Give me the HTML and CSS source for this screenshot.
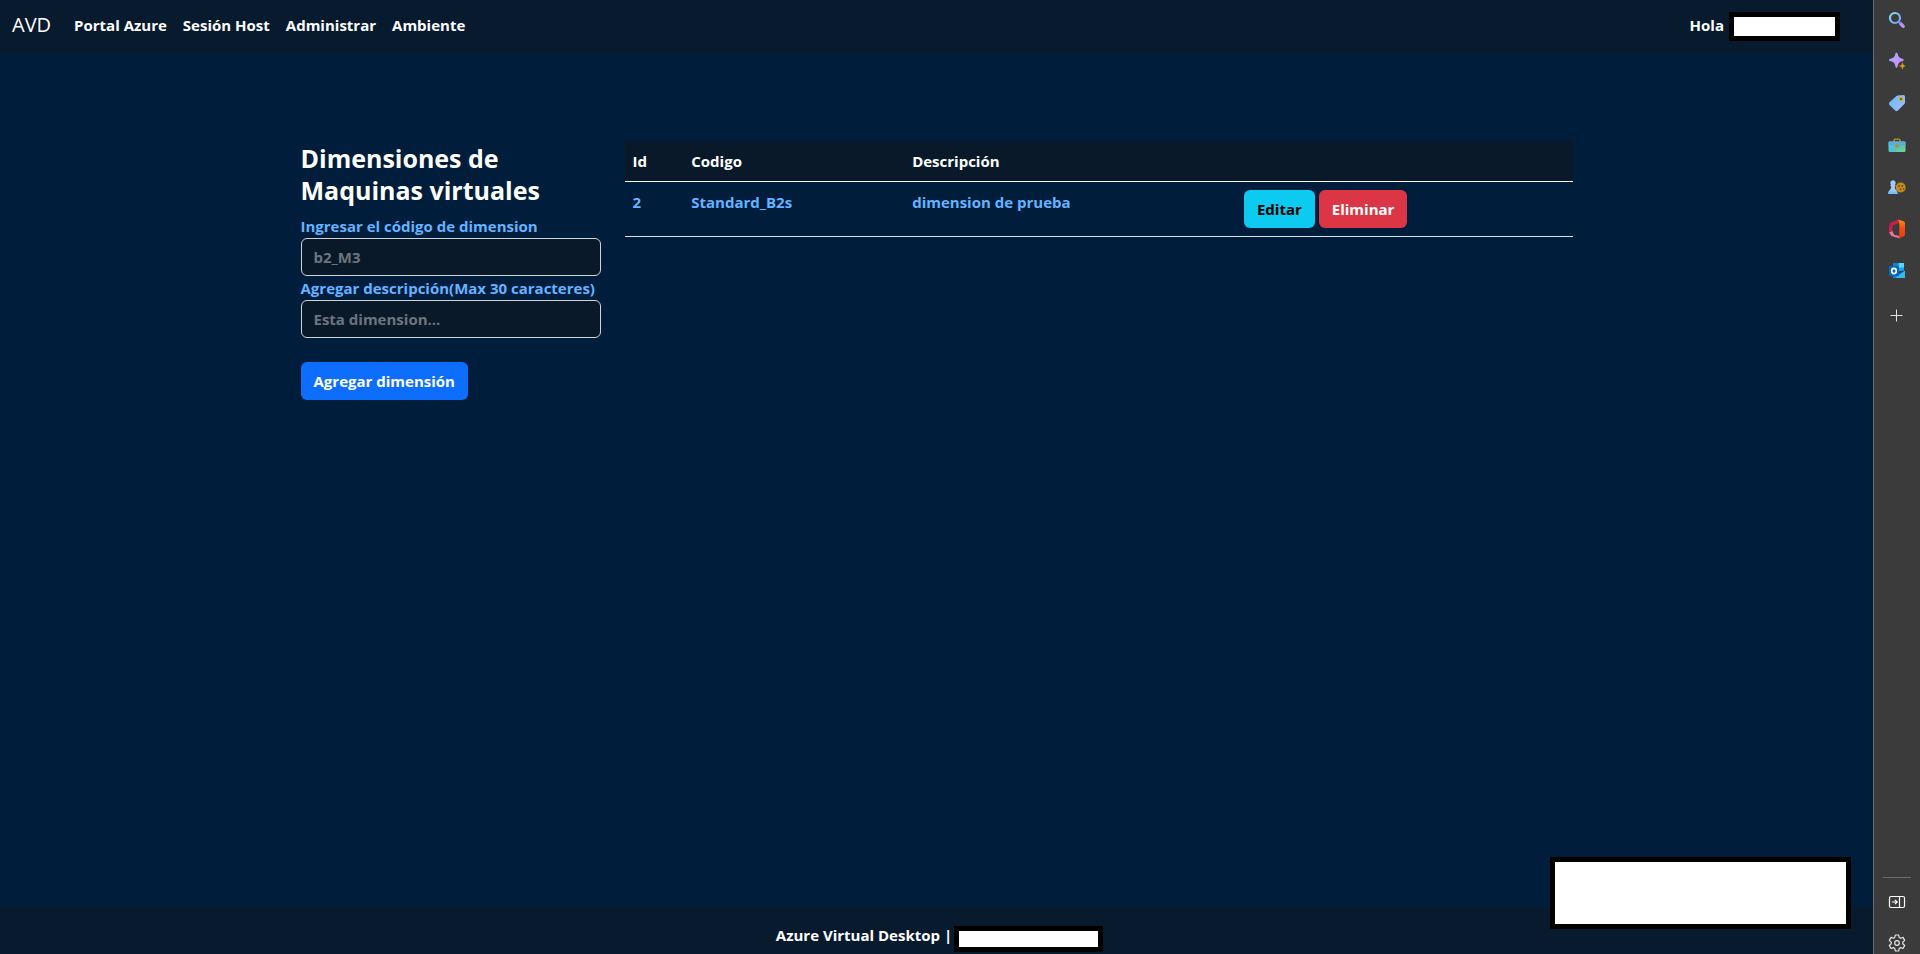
FILE: index.html
```html
<!DOCTYPE html>
<html lang="es">
<head>
<meta charset="utf-8">
<title>AVD - Dimensiones</title>
<link rel="stylesheet" href="styles.css">
</head>
<body>
<div class="page">
  <header class="navbar">
    <a class="brand" href="#">AVD</a>
    <nav class="nav">
      <a href="#">Portal Azure</a>
      <a href="#">Sesión Host</a>
      <a href="#">Administrar</a>
      <a href="#">Ambiente</a>
    </nav>
    <div class="user">Hola <span class="mask mask-user"></span></div>
  </header>
  <main class="container">
    <form class="form">
      <h1>Dimensiones de Maquinas virtuales</h1>
      <label for="codigo">Ingresar el código de dimension</label>
      <input id="codigo" type="text" placeholder="b2_M3">
      <label for="descripcion">Agregar descripción(Max 30 caracteres)</label>
      <input id="descripcion" type="text" maxlength="30" placeholder="Esta dimension...">
      <button class="btn primary" type="button">Agregar dimensión</button>
    </form>
    <div class="list">
      <table>
        <colgroup><col class="c-id"><col class="c-code"><col class="c-desc"><col></colgroup>
        <thead><tr><th>Id</th><th>Codigo</th><th>Descripción</th><th></th></tr></thead>
        <tbody><tr>
          <td>2</td><td>Standard_B2s</td><td>dimension de prueba</td>
          <td><div class="actions"><button class="btn info" type="button">Editar</button><button class="btn danger" type="button">Eliminar</button></div></td>
        </tr></tbody>
      </table>
    </div>
  </main>
  <footer class="footer"><span>Azure Virtual Desktop |</span><span class="mask mask-footer"></span></footer>
  <div class="mask mask-notice"></div>
</div>
<aside class="sidebar">
  <button type="button" aria-label="Buscar"><svg viewBox="0 0 18 18"><defs><linearGradient id="g1" x1="0" y1="0" x2="1" y2="1"><stop offset="0" stop-color="#8be0f5"/><stop offset="1" stop-color="#6d9df0"/></linearGradient></defs><path d="M12.500 12.500l2.800 2.800" stroke="#c08ff0" stroke-width="3.200" stroke-linecap="round"/><path d="M10.500 10.500l2 2" stroke="#7c8fe0" stroke-width="2"/><circle cx="7" cy="7" r="5" fill="none" stroke="url(#g1)" stroke-width="2.200"/></svg></button>
  <button type="button" aria-label="Descubrir"><svg viewBox="0 0 18 18"><defs><linearGradient id="g2" x1="0" y1="0" x2="1" y2="1"><stop offset="0" stop-color="#7cc4fb"/><stop offset=".55" stop-color="#c993fb"/><stop offset="1" stop-color="#b78af5"/></linearGradient></defs><path d="M8.500 .8c.8 0 1 .5 1.200 1.300.7 3 1.600 4 4.600 4.700 1 .3 1.500.6 1.500 1.200s-.5.900-1.500 1.200c-3 .7-3.900 1.700-4.600 4.700-.2.800-.4 1.900-1.200 1.900s-1-1.100-1.200-1.900c-.7-3-1.600-4-4.600-4.700C1.600 8.900 1 8.600 1 8s.6-.9 1.700-1.200c3-.7 3.900-1.700 4.600-4.700.2-.8.400-1.300 1.200-1.300z" fill="url(#g2)"/><path d="M14.500 9.800l1.100 3 2.400 1.200-2.400 1.200-1.100 2.800-1.200-2.800-2.800-1.200 2.800-1.200z" fill="#dc9c08" stroke="#3b3b3b" stroke-width=".4"/></svg></button>
  <button type="button" aria-label="Compras"><svg viewBox="0 0 18 18"><defs><linearGradient id="g3" x1="0" y1="0" x2="1" y2="1"><stop offset="0" stop-color="#66bdf0"/><stop offset="1" stop-color="#a4b9ff"/></linearGradient></defs><path d="M9.600 1.600L15.400 1q1.600 0 1.600 1.600v6q0 .8-.6 1.400l-6.500 6.400q-1.400 1.200-2.700 0L1.500 11q-1.200-1.300 0-2.700l6.700-6q.6-.6 1.400-.7z" fill="url(#g3)"/><circle cx="13" cy="5" r="2.200" fill="#e0a31b"/><circle cx="13" cy="5" r="1" fill="#6a4710"/></svg></button>
  <button type="button" aria-label="Herramientas"><svg viewBox="0 0 18 18"><defs><linearGradient id="g4" x1="0" y1="0" x2="1" y2="1"><stop offset="0" stop-color="#71c8ed"/><stop offset=".5" stop-color="#4cc0d0"/><stop offset="1" stop-color="#7edb70"/></linearGradient></defs><path d="M6 6V4.200q0-1 1-1h4q1 0 1 1V6" fill="none" stroke="#c9901d" stroke-width="1.300"/><rect x=".5" y="5.500" width="17" height="10.500" rx="1.300" fill="url(#g4)"/><path d="M.5 7q0-1.500 1.300-1.500h14.400q1.300 0 1.300 1.500v2.500H.5z" fill="#5aaed2"/><circle cx="9" cy="10" r="1.800" fill="#c78c18"/></svg></button>
  <button type="button" aria-label="Juegos"><svg viewBox="0 0 18 18"><circle cx="12.700" cy="9.500" r="5" fill="#c68a16"/><g fill="#574012"><circle cx="11" cy="8" r=".9"/><circle cx="14.300" cy="7.800" r=".9"/><circle cx="12.700" cy="11.300" r=".9"/><circle cx="15.600" cy="10.700" r=".7"/></g><path d="M5 2.200a2.700 2.700 0 0 1 2 4.500q1 .3.500 1.300l-.8.400q0 2.700 2 4.300.8.700.8 3.300H.3q0-2.600.9-3.300 2-1.600 2-4.300L2.400 8Q2 7 3 6.700a2.700 2.700 0 0 1 2-4.500z" fill="#9dcafb"/><path d="M.5 13.500h8.800V16H.3z" fill="#72bff7"/></svg></button>
  <button type="button" aria-label="Microsoft 365"><svg class="office" viewBox="0 0 18 20"><defs><linearGradient id="g6" x1="0" y1="0" x2="0" y2="1"><stop offset="0" stop-color="#f99300"/><stop offset=".45" stop-color="#f04e14"/><stop offset="1" stop-color="#e83e0c"/></linearGradient></defs><path d="M10 .5L3 3.600Q1 4.600 1 7v6.500L4.500 12V6.500L11 4z" fill="#c51f4f"/><path d="M1 13.600l3.500-1.700 1.500 3.800 6 1.300v2.500L3.500 17z" fill="#f4709a"/><path d="M10 .5l5.500 1.800q1.500.6 1.500 2v11.200q0 1.500-1.500 2L10 19.500l1.300-3V4z" fill="url(#g6)"/></svg></button>
  <button type="button" aria-label="Outlook"><svg viewBox="0 0 18 18"><path d="M5 1h11v10H5z" fill="#28a0e6"/><path d="M10.500 1H16v4.500h-5.500z" fill="#50d9ff"/><path d="M5 1h5.500v4.500H5z" fill="#1183d3"/><path d="M4 9h13v7H5z" fill="#1478c6"/><path d="M17 8.500V16H7z" fill="#35b8f1"/><path d="M17 8.500l-6 3.500-4-2.500z" fill="#0a4d8c"/><rect x="1" y="4" width="10" height="10" rx="1" fill="#0968bd"/><ellipse cx="6" cy="9" rx="2.300" ry="2.600" fill="none" stroke="#fff" stroke-width="1.600"/></svg></button>
  <button class="add" type="button" aria-label="Personalizar"><svg viewBox="0 0 18 18"><path d="M8.500 2.500v12M2.500 8.500h12" stroke="#e4e4e4" stroke-width="1"/></svg></button>
  <div class="bottom">
    <button type="button" aria-label="Ocultar barra lateral"><svg viewBox="0 0 18 18" fill="none" stroke="#fff" stroke-width="1.200"><rect x="1.500" y="3.500" width="15" height="11" rx="1.500"/><path d="M11.500 3.500v11M4 9h5M7 6.800L9.200 9 7 11.200"/></svg></button>
    <button type="button" aria-label="Configuración"><svg viewBox="0 0 18 18" fill="none" stroke="#e8e8e8" stroke-width="1.200" stroke-linejoin="round"><path d="M7.300 1h3.400l.5 2.500 1.400.8 2.400-.9 1.700 3-1.900 1.700v1.700l1.900 1.700-1.700 3-2.400-.9-1.400.8-.5 2.600H7.300l-.5-2.600-1.400-.8-2.400.9-1.700-3 1.900-1.700V8.100L1.300 6.400l1.700-3 2.400.9 1.400-.8z"/><circle cx="9" cy="9" r="2.300"/></svg></button>
  </div>
</aside>
</body>
</html>
```
FILE: styles.css
```css
* { box-sizing: border-box; }
body {
  margin: 0;
  min-height: 100vh;
  display: flex;
  background: #001e3c;
  color: #fff;
  font: 700 15px/24px "Open Sans", "Noto Sans", sans-serif;
}
a { color: inherit; text-decoration: none; }
button, input { font: inherit; }
.page {
  position: relative;
  flex: 1;
  min-width: 0;
  display: flex;
  flex-direction: column;
}
.navbar {
  display: flex;
  align-items: center;
  height: 53px;
  padding: 0 33px 4px 12px;
  background: #081a2e;
}
.brand {
  margin-right: 15px;
  font-size: 20px;
  font-weight: 400;
}
.nav { display: flex; }
.nav a { padding: 0 8px; }
.user {
  display: flex;
  align-items: center;
  gap: 5px;
  margin-left: auto;
}
.mask {
  display: block;
  background: #fff;
  border: 5px solid #000;
}
.mask-user { width: 111px; height: 29px; margin-top: 4px; }
.mask-footer { width: 149px; height: 26px; margin-top: 8px; }
.mask-notice {
  position: absolute;
  right: 22px;
  bottom: 25px;
  width: 301px;
  height: 72px;
}
.container {
  flex: 1;
  width: 100%;
  max-width: 1320px;
  margin: 0 auto;
  padding: 88px 24px 24px;
  display: grid;
  grid-template-columns: repeat(12, minmax(0, 1fr));
  column-gap: 24px;
  align-items: start;
}
.form {
  grid-column: span 3;
  display: flex;
  flex-direction: column;
  padding-top: 1px;
}
.list { grid-column: span 9; }
h1 {
  margin: 0 0 8px;
  font-size: 25px;
  line-height: 32px;
}
label { color: #66b2ff; white-space: nowrap; }
input {
  width: 100%;
  height: 38px;
  padding: 0 12px;
  color: #fff;
  background: #0a1929;
  border: 1px solid #ced4da;
  border-radius: 6px;
}
input::placeholder { color: #6c757d; opacity: 1; }
.btn {
  height: 38px;
  padding: 0 13px;
  border: 0;
  border-radius: 6px;
  color: #fff;
}
.primary { align-self: flex-start; margin-top: 24px; background: #0d6efd; }
.info { background: #0dcaf0; color: #000; }
.danger { background: #dc3545; }
table {
  width: 100%;
  table-layout: fixed;
  border-collapse: collapse;
}
.c-id { width: 6.2%; }
.c-code { width: 23.3%; }
.c-desc { width: 35%; }
th, td { padding: 8px; text-align: left; vertical-align: top; }
th { background: #0a1929; border-bottom: 1px solid #fff; }
td { color: #66b2ff; border-bottom: 1px solid #dee2e6; }
.actions { display: flex; gap: 4px; }
.footer {
  display: flex;
  justify-content: center;
  align-items: center;
  gap: 2px;
  height: 47px;
  padding: 14px 0 5px 6px;
  background: #081a2e;
}
.sidebar {
  width: 47px;
  display: flex;
  flex-direction: column;
  align-items: center;
  background: #3b3b3b;
  border-left: 1px solid #6b6b6b;
}
.sidebar button {
  display: flex;
  align-items: center;
  justify-content: center;
  flex: none;
  width: 42px;
  height: 42px;
  padding: 0;
  border: 0;
  background: none;
}
.sidebar > button:first-child { height: 40px; }
.sidebar svg { width: 18px; height: 18px; }
.sidebar .office { height: 20px; }
.sidebar .add { margin-top: 3px; }
.bottom {
  margin-top: auto;
  padding-top: 3px;
  height: 77px;
  width: 28px;
  display: flex;
  flex-direction: column;
  align-items: center;
  border-top: 1px solid #6b6b6b;
}
.bottom button:last-child { height: 40px; }
.sidebar { height: 100vh; overflow: hidden; }
```
